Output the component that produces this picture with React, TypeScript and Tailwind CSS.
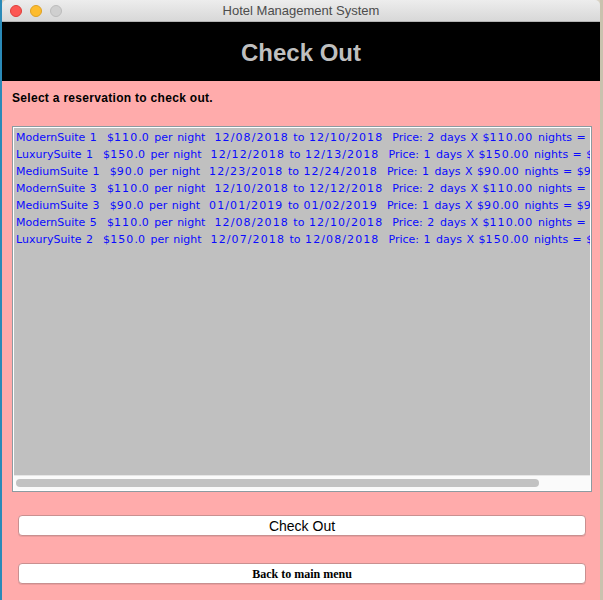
import React from "react";

const rows = [
  "ModernSuite 1  $110.0 per night  12/08/2018 to 12/10/2018  Price: 2 days X $110.00 nights = $220.00",
  "LuxurySuite 1  $150.0 per night  12/12/2018 to 12/13/2018  Price: 1 days X $150.00 nights = $150.00",
  "MediumSuite 1  $90.0 per night  12/23/2018 to 12/24/2018  Price: 1 days X $90.00 nights = $90.00",
  "ModernSuite 3  $110.0 per night  12/10/2018 to 12/12/2018  Price: 2 days X $110.00 nights = $220.00",
  "MediumSuite 3  $90.0 per night  01/01/2019 to 01/02/2019  Price: 1 days X $90.00 nights = $90.00",
  "ModernSuite 5  $110.0 per night  12/08/2018 to 12/10/2018  Price: 2 days X $110.00 nights = $220.00",
  "LuxurySuite 2  $150.0 per night  12/07/2018 to 12/08/2018  Price: 1 days X $150.00 nights = $150.00",
];

// digits in the original list font are wider than DejaVu's, so space them out a bit
function Row({ text }: { text: string }) {
  const parts = text.split(/([0-9/]+)/);
  return (
    <div className="whitespace-pre leading-[17px] text-[11px] text-[#0a0aff] font-['DejaVu_Sans',sans-serif] [word-spacing:1px]">
      {parts.map((p, i) =>
        /^[0-9/]+$/.test(p) ? (
          <span key={i} className="tracking-[1.1px]">
            {p}
          </span>
        ) : (
          <span key={i}>{p}</span>
        )
      )}
    </div>
  );
}

function TitleBar() {
  return (
    <div className="relative h-[22px] flex items-center bg-gradient-to-b from-[#ededed] to-[#d8d8d8] border-b border-[#b4b4b4] rounded-t-[5px]">
      {/* traffic lights */}
      <div className="flex gap-[8px] pl-[8px]">
        <span className="w-[12px] h-[12px] rounded-full bg-[#fc5753] border border-[#df3d39]" />
        <span className="w-[12px] h-[12px] rounded-full bg-[#fdbc2e] border border-[#dea123]" />
        <span className="w-[12px] h-[12px] rounded-full bg-[#cfcfcf] border border-[#bcbcbc]" />
      </div>
      <div className="absolute inset-0 flex items-center justify-center text-[13px] text-[#4c4c4c] font-['Liberation_Sans',sans-serif]">
        Hotel Management System
      </div>
    </div>
  );
}

export default function App() {
  return (
    <div className="w-[603px] h-[600px] flex overflow-hidden bg-[#d8d2c4]">
      <div className="w-[2px] h-full bg-[#2a8ab8]" />
      <div className="w-[598px] h-full flex flex-col">
        <TitleBar />

        {/* Header */}
        <div className="h-[59px] bg-black flex items-center justify-center pt-[2px]">
          <span className="text-[24px] font-bold text-[#bfbfbf] font-['Liberation_Sans',sans-serif]">
            Check Out
          </span>
        </div>

        {/* Body */}
        <div className="flex-1 bg-[#ffabab] flex flex-col pl-[10px] pr-[8px]">
          <div className="pt-[10px] h-[25px] leading-[15px] text-[12px] tracking-[0.3px] font-bold text-black font-['Liberation_Sans',sans-serif]">
            Select a reservation to check out.
          </div>

          <div className="mt-[20px] h-[366px] border border-[#8c9ba1] bg-white p-px flex flex-col">
            <div className="flex-1 bg-[#c0c0c0] overflow-hidden pl-[2px] pt-px">
              {rows.map((r, i) => (
                <Row key={i} text={r} />
              ))}
            </div>
            <div className="h-[15px] bg-[#fafafa] border-t border-[#e6e6e6] pt-[3px] pl-[2px]">
              <div className="h-[8px] w-[523px] rounded-full bg-[#c2c2c2]" />
            </div>
          </div>

          <button className="mt-[23px] mx-[6px] h-[21px] rounded-[4px] bg-white border border-[#c99090] shadow-[0_1px_0_rgba(0,0,0,0.08)] text-[14px] text-black font-['Liberation_Sans',sans-serif] leading-none">
            Check Out
          </button>

          <button className="mt-[27px] mx-[6px] h-[21px] rounded-[4px] bg-white border border-[#c99090] shadow-[0_1px_0_rgba(0,0,0,0.08)] text-[12px] font-bold text-black font-['Liberation_Serif',serif] leading-none">
            Back to main menu
          </button>
        </div>
      </div>
      <div className="w-[3px] h-full bg-[#c9c2ae]" />
    </div>
  );
}
